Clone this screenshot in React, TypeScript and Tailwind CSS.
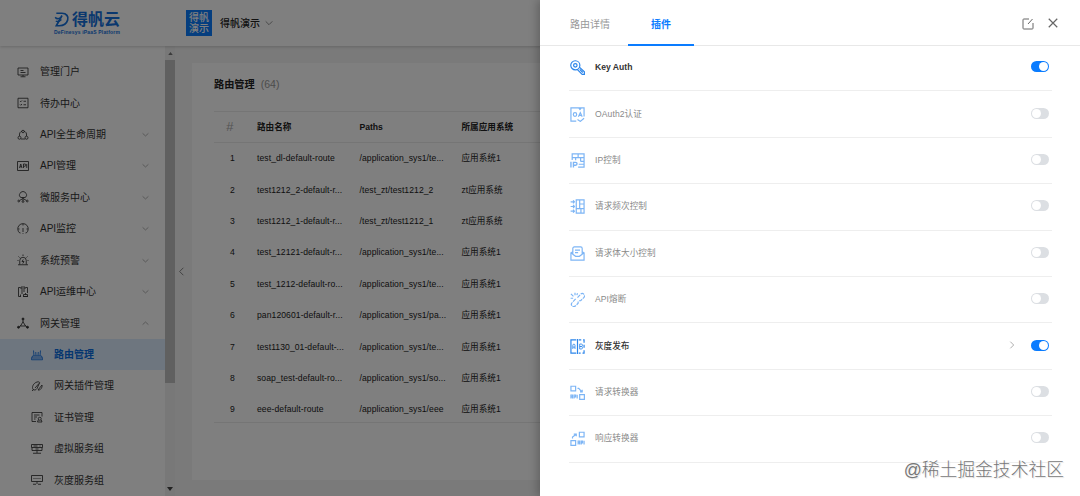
import clsx from 'clsx';
import type { ReactNode } from 'react';

// ─── Data ─────────────────────────────────────────────────────────────────────

interface MenuEntry {
  label: string;
  icon: ReactNode;
  arrow?: 'up' | 'down';
  child?: boolean;
  active?: boolean;
}

const MENU: MenuEntry[] = [
  {
    label: '管理门户',
    icon: <path d="M2 4h20v14H2zM12 18v3M7 21.500h10M7 9h6M7 13h10" />,
  },
  {
    label: '待办中心',
    icon: <path d="M2 2.500h20v19H2zM6 8l1.500 1.500L10 7M6 15l1.500 1.500L10 14M13 8.500h5M13 15.500h5" />,
  },
  {
    label: 'API全生命周期',
    arrow: 'down',
    icon: (
      <>
        <path d="M5 14c-1-6 2-9 5-9.500M19 14c1-6-2-9-5-9.500M8 20h8" />
        <circle cx="12" cy="5" r="2.500" />
        <circle cx="5" cy="17.500" r="3" />
        <circle cx="19" cy="17.500" r="3" />
      </>
    ),
  },
  {
    label: 'API管理',
    arrow: 'down',
    icon: (
      <>
        <path d="M1 3h22v18H1z" />
        <path d="M5 16l2.500-8L10 16M6 13.500h3M13 16V8h2.500a2 2 0 010 4.500H13M19.500 8v8" />
      </>
    ),
  },
  {
    label: '微服务中心',
    arrow: 'down',
    icon: (
      <>
        <path d="M8 13a5 5 0 01-2-8 6.500 6.500 0 0112 0 5 5 0 01-2 8zM12 13v6M12 15l-6 3.500M12 15l6 3.500" />
        <circle cx="3.500" cy="20" r="1.800" />
        <circle cx="20.500" cy="20" r="1.800" />
        <circle cx="12" cy="21" r="1.800" />
      </>
    ),
  },
  {
    label: 'API监控',
    arrow: 'down',
    icon: <path d="M7 20H5.500A10.500 10.500 0 1118.500 20H17M12 10v8M12 20.500v1.500M12 2v3M2 12h3M19 12h3" />,
  },
  {
    label: '系统预警',
    arrow: 'down',
    icon: <path d="M5.500 21v-8a6.500 6.500 0 0113 0v8M2 21.500h20M12 1v3M3 5l2 2M21 5l-2 2M1 13h2M21 13h2M12.500 11l-2.500 4h4l-2.500 4" />,
  },
  {
    label: 'API运维中心',
    arrow: 'down',
    icon: <path d="M7 3H3v18h5M17 3h4v11M8 2h8v4H8zM8 10h8M8 14h4M7 17v4M12 21h10M13 17h8v4h-8zM17 14v3" />,
  },
  {
    label: '网关管理',
    arrow: 'up',
    icon: (
      <>
        <path d="M12 6v4M8 17l-4 3M16 17l4 3M12 9.500l5 8.500H7z" />
        <circle cx="12" cy="4" r="2" fill="currentColor" />
        <circle cx="3" cy="20.500" r="2" fill="currentColor" />
        <circle cx="21" cy="20.500" r="2" fill="currentColor" />
      </>
    ),
  },
  {
    label: '路由管理',
    child: true,
    active: true,
    icon: <path d="M3 14h18l2 5v2.500H1V19zM1 18h22M6 14l-1-11M10 14l-.5-8M14 14l.5-8M18 14l1-11" />,
  },
  {
    label: '网关插件管理',
    child: true,
    icon: <path d="M4 19C1 14 5 6 12 4c3-1 5 0 6 2M4 19c3 2 6 1 8-2l5-11M8 16l8-9M14 20l8-10c1 5-3 11-8 10zM2 22l3-3" />,
  },
  {
    label: '证书管理',
    child: true,
    icon: (
      <>
        <path d="M10 21H2V3h20v8M6 8h11M6 12h6M6 16h3M14.500 18l-1.500 4M20.500 18l1.500 4M13 22h9" />
        <circle cx="17.500" cy="15.500" r="3" />
      </>
    ),
  },
  {
    label: '虚拟服务组',
    child: true,
    icon: <path d="M1 3h22v6H1zM2 9v6h20V9M5 6h8M17 6h2M9 12h6M12 15v5M4 20.500h16" />,
  },
  {
    label: '灰度服务组',
    child: true,
    icon: <path d="M1 3h22v12H1zM5 9h2M9 9h2M13 9h2M17 9h2M12 15v5M4 20.500h6M14 20.500h6" />,
  },
];

const ROUTES = [
  ['test_dl-default-route', '/application_sys1/te...', '应用系统1'],
  ['test1212_2-default-r...', '/test_zt/test1212_2', 'zt应用系统'],
  ['test1212_1-default-r...', '/test_zt/test1212_1', 'zt应用系统'],
  ['test_12121-default-r...', '/application_sys1/te...', '应用系统1'],
  ['test_1212-default-ro...', '/application_sys1/te...', '应用系统1'],
  ['pan120601-default-r...', '/application_sys1/pa...', '应用系统1'],
  ['test1130_01-default-...', '/application_sys1/te...', '应用系统1'],
  ['soap_test-default-ro...', '/application_sys1/so...', '应用系统1'],
  ['eee-default-route', '/application_sys1/eee', '应用系统1'],
];

interface Plugin {
  label: string;
  icon: ReactNode;
  on?: boolean;
  detail?: boolean;
}

const PLUGINS: Plugin[] = [
  {
    label: 'Key Auth',
    on: true,
    icon: (
      <>
        <circle cx="8.500" cy="8.500" r="7.300" />
        <circle cx="8.500" cy="8.500" r="2.800" />
        <path d="M15 11.500l8 7.500v4h-3.500l-8-8M15.500 15l5 5" />
      </>
    ),
  },
  {
    label: 'OAuth2认证',
    icon: (
      <>
        <path d="M10 22.500H1.500v-21h21V15M14 1.500l2 2.500 2-2.500M12 20l4.500 3 6-5" />
        <ellipse cx="8" cy="12" rx="2.700" ry="3" />
        <path d="M13.500 15.500L16.500 9l3 6.500M14.500 13.500h4" />
      </>
    ),
  },
  {
    label: 'IP控制',
    icon: (
      <>
        <path d="M3.500 11V1.500h19v21H13M3.500 7.500h19M13 1.500v6M9 7.500v4M17 7.500v6M17 13.500h5.500M14 18h8.500" />
        <path d="M1.500 14v9M5.500 23v-8H9a2.200 2.200 0 010 4.500H5.500" strokeWidth="2.200" />
      </>
    ),
  },
  {
    label: '请求频次控制',
    icon: (
      <>
        <path d="M10 1.500h12.500v21H10zM15.500 1.500v14M10 15.500h12.500M15.500 8h7M17.500 15.500v7" />
        <path d="M1 4.500h6M5 2l2 2.500L5 7M1 12h6M5 9.500l2 2.500-2 2.500M1 19.500h6M5 17l2 2.500L5 22" />
      </>
    ),
  },
  {
    label: '请求体大小控制',
    icon: <path d="M4.500 9L1.500 11v11.500h21V11l-3-2M1.500 11l7.500 5.500h6l7.500-5.500M4.500 13V4a2.500 2.500 0 012.500-2.500h10A2.500 2.500 0 0119.500 4v9M8 6.500h8M8 10.500h5" />,
  },
  {
    label: 'API熔断',
    icon: <path d="M12 9l5-5.500a3.600 3.600 0 015 5.500l-5 5h-3M9 11l-5.500 6a3.600 3.600 0 005 5.500L13 18v-3M8 1v4M1.500 3l4 4M1 10h4M12 2l-1 3" strokeDasharray="6 1.500" />,
  },
  {
    label: '灰度发布',
    on: true,
    detail: true,
    icon: (
      <>
        <path d="M10 1.500H1.500v21H10M12 0v24M14 1.500h4M21 1.500h1.500V6M22.500 9v5M22.500 18v4.500H20M17 22.500h-3" />
        <path d="M4.500 16V10a1.700 1.700 0 013.500 0v6M4.500 13H8M15.500 8H18a2 2 0 010 4h-2.500zM15.500 12H18a2 2 0 010 4h-2.500z" strokeWidth="1.300" />
      </>
    ),
  },
  {
    label: '请求转换器',
    icon: (
      <>
        <path d="M1.500 2h7.500v7.500H1.500zM15.500 15.500H23V23h-7.500zM12 5.500h2l5 5.500M19.500 7.500V11H16" />
        <path d="M1.500 21.500v-5.500H4v5.500M1.500 19H4M6.500 21.500v-5.500H9v3H6.500M11.500 15.500v6" />
      </>
    ),
  },
  {
    label: '响应转换器',
    icon: (
      <>
        <path d="M15 2h7.500v7.500H15zM1.500 15.500H9V23H1.500zM4 12V9.500L9.500 5.500M6 5h4v3.500" />
        <path d="M13 21.500v-5.500h2.500v5.500M13 19h2.500M18 21.500v-5.500h2v3h-2M22.500 15.500v6" />
      </>
    ),
  },
];

// ─── Small pieces ─────────────────────────────────────────────────────────────

function Glyph({ children, className, width = 1.7 }: { children: ReactNode; className?: string; width?: number }) {
  return (
    <svg
      viewBox="0 0 24 24"
      fill="none"
      stroke="currentColor"
      strokeWidth={width}
      className={clsx('shrink-0', className)}
    >
      {children}
    </svg>
  );
}

function Toggle({ on }: { on?: boolean }) {
  return (
    <span
      className={clsx(
        'mb-[2px] flex h-[11px] w-[18px] shrink-0 items-center rounded-full px-px',
        on ? 'justify-end bg-[#0a7cff]' : 'justify-start bg-[#dcdfe3]'
      )}
    >
      <span className="h-[9px] w-[9px] rounded-full bg-white" />
    </span>
  );
}

// ─── Page sections ────────────────────────────────────────────────────────────

function TopBar() {
  return (
    <header className="z-10 flex h-[46px] shrink-0 items-center bg-white shadow-[0_1px_3px_rgba(0,0,0,0.18)]">
      <div className="ml-[54px] w-[132px] text-[#1470dc]">
        <div className="flex items-center">
          <svg viewBox="0 0 28 30" fill="none" stroke="currentColor" strokeWidth="3" className="h-[17px] w-[16px]">
            <path d="M4 4h10c8 0 12 6 10 12-2 7-8 10-15 10H4l10-18" />
            <path d="M2 11c2 3 6 3 9 1M3 18c3 1 7 0 10-3" strokeWidth="2.500" />
          </svg>
          <span className="ml-[2px] text-[16px] font-bold leading-[17px]">得帆云</span>
        </div>
        <div className="mt-px whitespace-nowrap text-[5px] font-bold leading-[6px] tracking-[0.180px]">
          DeFinesys iPaaS Platform
        </div>
      </div>
      <div className="grid h-[26px] w-[26px] place-items-center bg-[#0a7cff] text-[10px] font-medium leading-[11px] text-white">
        <span className="w-5">得帆演示</span>
      </div>
      <span className="ml-2 text-[10px] font-medium text-[#222]">得帆演示</span>
      <Glyph className="ml-[5px] h-[8px] w-[8px] text-[#777]" width={2.4}>
        <path d="M2 7l10 10L22 7" />
      </Glyph>
    </header>
  );
}

function Sidebar() {
  return (
    <nav className="flex h-full w-[175px] shrink-0 bg-white">
      <ul className="w-[165px] pt-[10px]">
        {MENU.map((item) => (
          <li
            key={item.label}
            className={clsx(
              'flex h-[31.430px] items-center pr-[16px] text-[10px]',
              item.child ? 'pl-[31px]' : 'pl-[17px]',
              item.active ? 'bg-[#dcecff] font-bold text-[#0a6ce0]' : 'text-[#333]'
            )}
          >
            <Glyph className="h-[12px] w-[12px]">{item.icon}</Glyph>
            <span className="ml-[11px] flex-1 whitespace-nowrap">{item.label}</span>
            {item.arrow && (
              <Glyph className="h-[7px] w-[7px] text-[#888]" width={2.2}>
                <path d={item.arrow === 'up' ? 'M2 16l10-9 10 9' : 'M2 8l10 9L22 8'} />
              </Glyph>
            )}
          </li>
        ))}
      </ul>
      {/* Scrollbar */}
      <div className="flex w-[10px] flex-col items-center bg-[#f1f1f1] pt-[6px] pb-[5px]">
        <svg viewBox="0 0 6 4" className="h-[3px] w-[5px] shrink-0 fill-[#777]">
          <path d="M0 4l3-4 3 4z" />
        </svg>
        <div className="mt-[5px] h-[323px] w-full shrink-0 bg-[#c1c1c1]" />
        <svg viewBox="0 0 6 4" className="mt-auto h-[4px] w-[6px] shrink-0 fill-[#444]">
          <path d="M0 0h6L3 4z" />
        </svg>
      </div>
    </nav>
  );
}

function RouteTable() {
  return (
    <section className="mt-[17px] h-[417px] flex-1 bg-white pl-[22px]">
      <h1 className="flex h-[48px] items-center pb-[4px] text-[10.200px] font-bold text-[#222]">
        路由管理
        <span className="ml-[6px] text-[10.500px] font-normal text-[#999]">(64)</span>
      </h1>
      <div className="h-[312px] border-y border-[#ebebeb] text-[8.600px] text-[#222]">
        <div className="grid h-[31px] grid-cols-[43px_102.500px_102px_1fr] items-center border-b border-[#ebebeb] font-bold">
          <span className="pl-[12px] text-[13px] font-normal italic text-[#aaa]">#</span>
          <span>路由名称</span>
          <span>Paths</span>
          <span>所属应用系统</span>
        </div>
        {ROUTES.map(([name, path, system], i) => (
          <div
            key={name}
            className="grid h-[31.400px] grid-cols-[43px_102.500px_102px_1fr] items-center whitespace-nowrap"
          >
            <span className="pl-[16px]">{i + 1}</span>
            <span className="tracking-[0.070px]">{name}</span>
            <span className="tracking-[0.070px]">{path}</span>
            <span>{system}</span>
          </div>
        ))}
      </div>
    </section>
  );
}

function PluginDrawer() {
  return (
    <aside className="absolute inset-y-0 right-0 w-[540px] bg-white shadow-[-3px_0_8px_rgba(0,0,0,0.22)]">
      <div className="flex h-[46px] border-b border-[#e8e8e8] pl-[30px] pr-[21px] text-[10px]">
        <span className="pt-[17px] leading-[15px] text-[#999]">路由详情</span>
        <span className="-mb-px ml-[18px] w-[66px] border-b-2 border-[#0a7cff] pt-[17px] text-center font-bold leading-[15px] text-[#0a7cff]">
          插件
        </span>
        <div className="ml-auto flex items-center gap-[13px] text-[#666]">
          <Glyph className="mt-[2px] h-[12px] w-[12px]" width={2}>
            <path d="M14 2H3.500A1.500 1.500 0 002 3.500v17A1.500 1.500 0 003.500 22h17a1.500 1.500 0 001.500-1.500V10M12 12L21 2" />
          </Glyph>
          <Glyph className="h-[12px] w-[12px]" width={2.4}>
            <path d="M3.500 3.500l17 17M20.500 3.500l-17 17" />
          </Glyph>
        </div>
      </div>
      <ul className="-mt-px pl-[29px] pr-[28px]">
        {PLUGINS.map((plugin) => (
          <li
            key={plugin.label}
            className="flex h-[46.400px] items-center border-b border-[#eeeeee] pr-[3px] text-[8.600px]"
          >
            <Glyph
              className={clsx('ml-px h-[15px] w-[15px]', plugin.on ? 'text-[#2b85ea]' : 'text-[#7db5f5]')}
              width={1.9}
            >
              {plugin.icon}
            </Glyph>
            <span
              className={clsx(
                'ml-[10px] flex-1',
                plugin.on ? 'font-bold text-[#333]' : 'tracking-[0.080px] text-[#8a8a8a]',
                plugin.detail && 'font-medium'
              )}
            >
              {plugin.label}
            </span>
            {plugin.detail && (
              <Glyph className="mr-[15px] mb-[2px] h-[8px] w-[8px] text-[#999]" width={2.4}>
                <path d="M7 2l10 10L7 22" />
              </Glyph>
            )}
            <Toggle on={plugin.on} />
          </li>
        ))}
      </ul>
      <span className="absolute right-[16px] bottom-[13px] whitespace-nowrap text-[17.800px] font-light leading-[26px] text-[#777] [text-shadow:0_0_2px_#fff,1px_1px_1px_#ddd]">
        @稀土掘金技术社区
      </span>
    </aside>
  );
}

export default function App() {
  return (
    <div className="relative flex h-[496px] w-[1080px] flex-col overflow-hidden bg-[#f5f5f5] font-['Liberation_Sans','Noto_Sans_CJK_SC',sans-serif]">
      <TopBar />
      <main className="flex h-[450px]">
        <Sidebar />
        <div className="flex w-[17px] shrink-0 items-center">
          <Glyph className="ml-[2px] h-[9px] w-[9px] text-[#777]" width={2.4}>
            <path d="M17 2L7 12l10 10" />
          </Glyph>
        </div>
        <RouteTable />
      </main>
      <div className="absolute inset-0 z-10 bg-black/50" />
      <div className="absolute inset-0 z-20">
        <PluginDrawer />
      </div>
    </div>
  );
}
